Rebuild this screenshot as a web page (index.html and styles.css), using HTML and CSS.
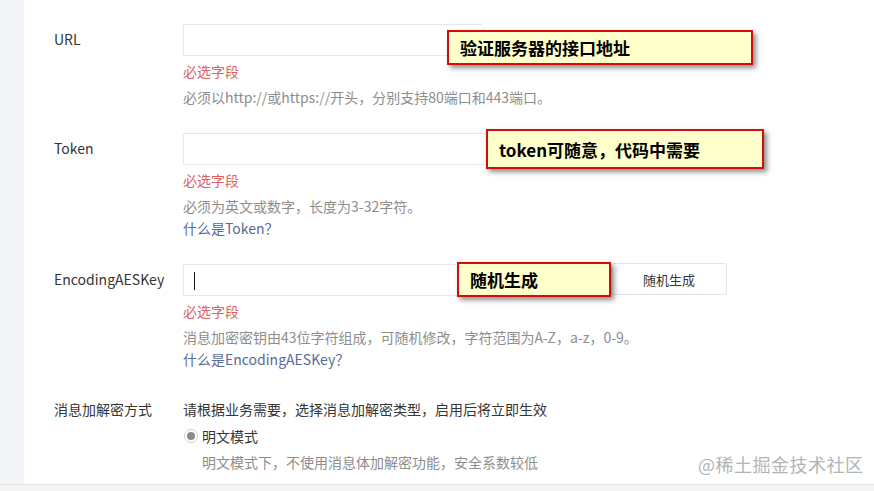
FILE: index.html
```html
<!DOCTYPE html>
<html lang="zh-CN">
<head>
<meta charset="utf-8">
<title>服务器配置</title>
<link rel="stylesheet" href="styles.css">
</head>
<body>
<div class="app">
  <aside class="side"></aside>
  <main class="panel">
    <div class="form-row">
      <div class="label">URL</div>
      <div class="control">
        <div class="field"><div class="input input-url"></div></div>
        <p class="err">必选字段</p>
        <p class="help">必须以http://或https://开头，分别支持80端口和443端口。</p>
      </div>
    </div>
    <div class="form-row">
      <div class="label">Token</div>
      <div class="control">
        <div class="field"><div class="input input-wide"></div></div>
        <p class="err">必选字段</p>
        <p class="help">必须为英文或数字，长度为3-32字符。</p>
        <a class="link">什么是Token？</a>
      </div>
    </div>
    <div class="form-row">
      <div class="label">EncodingAESKey</div>
      <div class="control">
        <div class="field">
          <div class="input input-key"><span class="caret"></span></div>
          <button class="btn">随机生成</button>
        </div>
        <p class="err">必选字段</p>
        <p class="help">消息加密密钥由43位字符组成，可随机修改，字符范围为A-Z，a-z，0-9。</p>
        <a class="link">什么是EncodingAESKey？</a>
      </div>
    </div>
    <div class="form-row row-mode">
      <div class="label label-text">消息加解密方式</div>
      <div class="control">
        <p class="desc">请根据业务需要，选择消息加解密类型，启用后将立即生效</p>
        <div class="radio-line"><span class="radio"><span class="dot"></span></span><span class="radio-text">明文模式</span></div>
        <p class="help help-indent">明文模式下，不使用消息体加解密功能，安全系数较低</p>
      </div>
    </div>
  </main>
  <div class="callout callout-url">验证服务器的接口地址</div>
  <div class="callout callout-token">token可随意，代码中需要</div>
  <div class="callout callout-key">随机生成</div>
  <div class="watermark">@稀土掘金技术社区</div>
</div>
<div class="bottom-bar"></div>
</body>
</html>
```
FILE: styles.css
```css
html, body {
  margin: 0;
  padding: 0;
  background: #ffffff;
  overflow: hidden;
}
body {
  font-family: "Noto Sans CJK SC", "Microsoft YaHei", sans-serif;
  font-size: 14px;
  color: #353535;
}
.app {
  position: relative;
  display: flex;
  height: 484px;
}
.side {
  width: 24px;
  flex: none;
  background: #f4f5f9;
}
.panel {
  flex: 1;
  padding: 24px 0 0 30px;
  background: #fff;
}
.form-row {
  display: flex;
  margin-bottom: 25px;
}
.label {
  width: 129px;
  flex: none;
  line-height: 30px;
  color: #353535;
}
.label-text {
  line-height: 22px;
}
.control {
  flex: 1;
  display: flex;
  flex-direction: column;
  align-items: flex-start;
}
.field {
  display: flex;
  height: 32px;
}
.input {
  box-sizing: border-box;
  height: 32px;
  border: 1px solid #e7e7eb;
  border-radius: 2px;
  background: #fff;
  position: relative;
}
.input-url {
  width: 300px;
  border-right-color: #f6f6f6;
}
.input-wide { width: 420px; }
.input-key { width: 428px; }
.caret {
  position: absolute;
  left: 10px;
  top: 7px;
  width: 1px;
  height: 18px;
  background: #111;
}
.btn {
  box-sizing: border-box;
  width: 116px;
  height: 32px;
  margin-top: -1px;
  border: 1px solid #e4e4e4;
  border-radius: 3px;
  background: #fff;
  font-family: inherit;
  font-size: 13px;
  color: #353535;
}
.err {
  margin: 4px 0 0;
  line-height: 22px;
  color: #e15f63;
}
.help {
  margin: 4px 0 0;
  line-height: 22px;
  color: #8d8d8d;
}
.link {
  line-height: 22px;
  color: #576b95;
  text-decoration: none;
}
.row-mode {
  padding-top: 3px;
}
.desc {
  margin: 0;
  line-height: 22px;
  color: #353535;
}
.radio-line {
  display: flex;
  align-items: center;
  margin-top: 5px;
  height: 22px;
}
.radio {
  box-sizing: border-box;
  width: 14px;
  height: 14px;
  margin-left: 1px;
  margin-right: 4px;
  border: 1px solid #d2d2d2;
  border-radius: 50%;
  display: flex;
  align-items: center;
  justify-content: center;
  background: #fff;
}
.dot {
  width: 8px;
  height: 8px;
  border-radius: 50%;
  background: #8a8a8a;
}
.radio-text { color: #353535; }
.help-indent { margin-left: 19px; }

.callout {
  position: absolute;
  box-sizing: border-box;
  border: 2px solid #d10d0d;
  background: #ffffcc;
  box-shadow: 3px 3px 5px rgba(0, 0, 0, 0.45);
  font-family: "Noto Sans CJK SC", "SimSun", sans-serif;
  font-weight: 700;
  font-size: 17px;
  color: #000;
  display: flex;
  align-items: center;
  padding-left: 11px;
}
.callout-url { left: 447px; top: 30px; width: 306px; height: 35px; }
.callout-token { left: 486px; top: 129px; width: 278px; height: 40px; }
.callout-key { left: 457px; top: 262px; width: 154px; height: 35px; }

.watermark {
  position: absolute;
  left: 698px;
  top: 452px;
  font-size: 18px;
  line-height: 24px;
  color: #b4b4b4;
  letter-spacing: 0.5px;
}
.bottom-bar {
  height: 7px;
  border-top: 1px solid #e2e2e2;
  background: #f4f4f4;
}
```
